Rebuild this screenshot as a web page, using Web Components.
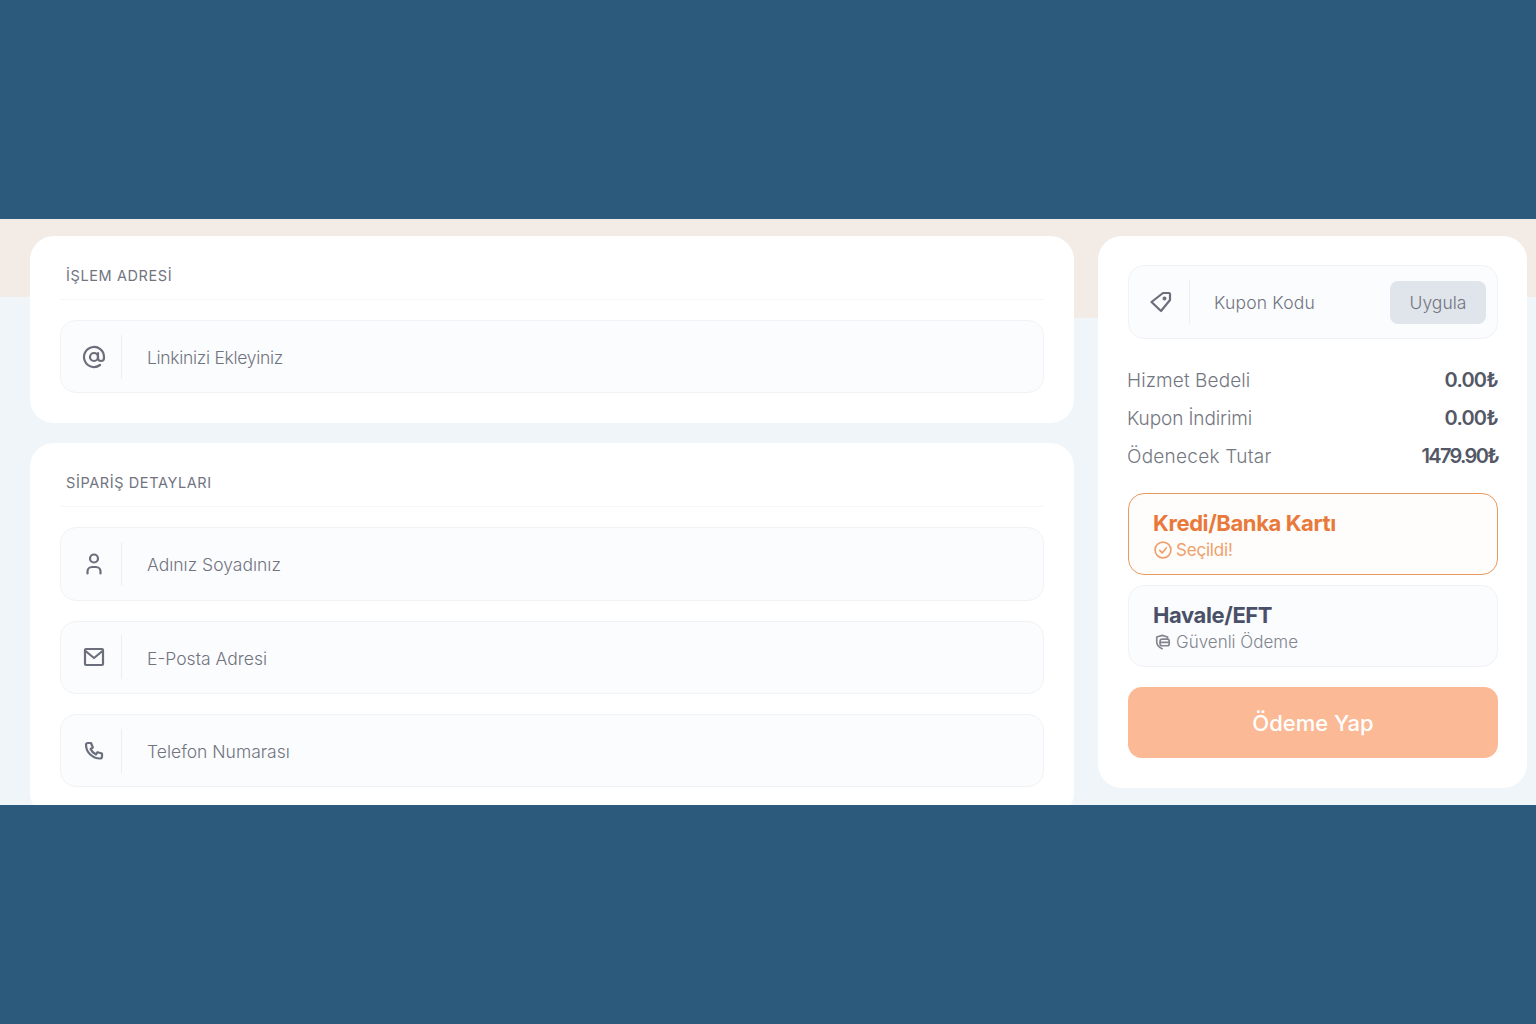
<!doctype html>
<html lang="tr">
<head>
<meta charset="utf-8">
<title>Ödeme</title>
<style>
  html, body { margin: 0; background: #2c5a7c; }
  body { font-family: "Inter", "Noto Sans", sans-serif; }
</style>
</head>
<body>
<checkout-page>
  <div slot="left" style="display:flex;flex-direction:column;gap:20px">
    <panel-card heading="İŞLEM ADRESİ">
      <icon-field icon="at" label="Linkinizi Ekleyiniz" style="--track:-.3px"></icon-field>
    </panel-card>
    <panel-card heading="SİPARİŞ DETAYLARI">
      <icon-field icon="user" label="Adınız Soyadınız"></icon-field>
      <icon-field icon="mail" label="E-Posta Adresi"></icon-field>
      <icon-field icon="phone" label="Telefon Numarası"></icon-field>
    </panel-card>
  </div>
  <summary-card slot="right">
    <icon-field icon="tag" label="Kupon Kodu" action="Uygula" compact style="--track:.2px"></icon-field>
    <div style="display:flex;flex-direction:column;gap:8px;margin:26px 0 22px -1px">
      <price-row label="Hizmet Bedeli" value="0.00₺"></price-row>
      <price-row label="Kupon İndirimi" value="0.00₺" style="--label-track:-.1px"></price-row>
      <price-row label="Ödenecek Tutar" value="1479.90₺" style="--val-track:-1.7px;--label-track:.25px"></price-row>
    </div>
    <pay-option selected title-text="Kredi/Banka Kartı" note="Seçildi!"></pay-option>
    <pay-option title-text="Havale/EFT" note="Güvenli Ödeme"></pay-option>
    <pay-button>Ödeme Yap</pay-button>
  </summary-card>
</checkout-page>

<script>
const ICONS = {
  at: '<circle cx="12" cy="12" r="4"/><path d="M16 8v5a3 3 0 0 0 6 0v-1a10 10 0 1 0-4 8"/>',
  user: '<circle cx="12" cy="6.5" r="4"/><path d="M5.5 21.5v-2a4.5 4.5 0 0 1 4.5-4.5h4a4.5 4.5 0 0 1 4.5 4.5v2"/>',
  mail: '<rect x="3" y="4" width="18" height="16" rx="1"/><path d="M3.5 6l8.500 7 8.500-7"/>',
  phone: '<path d="M6 4h3l1.800 4.500-2.200 1.500a10 10 0 0 0 5.400 5.400l1.500-2.200L20 14.500v3a2 2 0 0 1-2 2A14 14 0 0 1 4 6a2 2 0 0 1 2-2"/>',
  tag: '<path d="M14 3h6a1 1 0 0 1 1 1v6L12 21 2.500 12z"/><circle cx="15.500" cy="8.500" r=".9"/>',
  check: '<circle cx="12" cy="12" r="9.500"/><path d="M8 12.500l3 3 5-6"/>',
  shield: '<path d="M11 4l6.500 2v1.500M11 4L4.500 6v6c0 4 3 6.500 6.500 8"/><rect x="8.500" y="8.500" width="11" height="8" rx="2.500"/><path d="M8.500 12.500h11"/>'
}

function icon(name, size, width) {
  return `<svg width="${size}" height="${size}" viewBox="0 0 24 24" fill="none" stroke="currentColor" stroke-width="${width}" stroke-linecap="round" stroke-linejoin="round">${ICONS[name]}</svg>`
}

class CheckoutPage extends HTMLElement {
  connectedCallback() {
    const shadow = this.attachShadow({ mode: 'open' })
    shadow.innerHTML = `
      <style>
        :host { display: block; height: 1024px; padding-top: 219px; box-sizing: border-box; overflow: hidden; }
        .strip {
          height: 586px;
          overflow: hidden;
          box-sizing: border-box;
          padding: 17px 9px 0 30px;
          display: grid;
          grid-template-columns: 1044px 429px;
          column-gap: 24px;
          align-items: start;
          background:
            linear-gradient(#f3ebe5, #f3ebe5) 0 0 / 100% 78px no-repeat,
            linear-gradient(#f3ebe5, #f3ebe5) 1074px 0 / 24px 99px no-repeat,
            #f0f5fa;
        }
      </style>
      <div class="strip">
        <slot name="left"></slot>
        <slot name="right"></slot>
      </div>
    `
  }
}

class PanelCard extends HTMLElement {
  connectedCallback() {
    const shadow = this.attachShadow({ mode: 'open' })
    shadow.innerHTML = `
      <style>
        :host { display: block; background: #fff; border-radius: 24px; padding: 0 30px 30px; }
        .head {
          height: 64px;
          padding: 16px 6px 0;
          box-sizing: border-box;
          display: flex;
          align-items: center;
          border-bottom: 1px solid #f5f6f8;
          margin-bottom: 20px;
          font-size: 14.500px;
          letter-spacing: .6px;
          color: #71747f;
        }
        .list { display: flex; flex-direction: column; gap: 20px; }
      </style>
      <div class="head">${this.getAttribute('heading')}</div>
      <div class="list"><slot></slot></div>
    `
  }
}

class IconField extends HTMLElement {
  connectedCallback() {
    const shadow = this.attachShadow({ mode: 'open' })
    const action = this.getAttribute('action')
    shadow.innerHTML = `
      <style>
        :host {
          display: flex;
          align-items: center;
          height: 73.330px;
          box-sizing: border-box;
          background: #fbfcfe;
          border: 1px solid #f0f2f5;
          border-radius: 16px;
          color: #71747f;
        }
        :host([compact]) { height: 74px; }
        .icon {
          width: 61px;
          height: 44px;
          box-sizing: border-box;
          padding-left: 21px;
          border-right: 1px solid #eceef1;
          display: flex;
          align-items: center;
          flex: none;
          color: #6b6f7c;
        }
        :host([compact]) .icon { padding-left: 20px; }
        .label { margin: 2px 0 0 25px; flex: 1; font-size: 17.500px; font-weight: 300; letter-spacing: var(--track, 0); }
        :host([compact]) .label { margin: 0 0 0 24px; }
        button {
          font: inherit;
          font-size: 17.500px;
          font-weight: 300;
          color: #71747f;
          width: 96px;
          height: 43px;
          margin-right: 11px;
          border: 0;
          border-radius: 8px;
          background: #e0e4eb;
          padding: 0;
        }
      </style>
      <span class="icon">${icon(this.getAttribute('icon'), 24, 2.2)}</span>
      <span class="label">${this.getAttribute('label')}</span>
      ${action ? `<button>${action}</button>` : ''}
    `
  }
}

class SummaryCard extends HTMLElement {
  connectedCallback() {
    const shadow = this.attachShadow({ mode: 'open' })
    shadow.innerHTML = `
      <style>
        :host { display: block; background: #fff; border-radius: 24px; padding: 29px 29px 30px 30px; }
      </style>
      <slot></slot>
    `
  }
}

class PriceRow extends HTMLElement {
  connectedCallback() {
    const shadow = this.attachShadow({ mode: 'open' })
    shadow.innerHTML = `
      <style>
        :host { display: flex; justify-content: space-between; align-items: center; height: 30px; font-size: 19px; font-weight: 300; letter-spacing: var(--label-track, .1px); color: #74777f; }
        b { font-weight: 600; font-size: 20px; color: #535766; letter-spacing: var(--val-track, -.8px); }
      </style>
      <span>${this.getAttribute('label')}</span>
      <b>${this.getAttribute('value')}</b>
    `
  }
}

class PayOption extends HTMLElement {
  connectedCallback() {
    const shadow = this.attachShadow({ mode: 'open' })
    const selected = this.hasAttribute('selected')
    shadow.innerHTML = `
      <style>
        :host {
          display: block;
          height: 82px;
          box-sizing: border-box;
          margin-bottom: 10px;
          padding: 14px 24px 0;
          background: #fbfcfe;
          border: 1px solid #f0f2f5;
          border-radius: 16px;
        }
        :host([selected]) { background: #fffdfb; border-color: #e89a5e; }
        .title { font-size: 22px; line-height: 30px; font-weight: 700; letter-spacing: -.4px; color: #4a5068; }
        :host([selected]) .title { color: #e8793a; }
        .note { display: flex; align-items: center; gap: 3px; font-size: 17px; font-weight: 300; line-height: 24px; color: #82858e; }
        :host([selected]) .note { color: #eea06a; font-weight: 400; letter-spacing: -.2px; }
      </style>
      <div class="title">${this.getAttribute('title-text')}</div>
      <div class="note">${icon(selected ? 'check' : 'shield', 20, 2)}<span>${this.getAttribute('note')}</span></div>
    `
  }
}

class PayButton extends HTMLElement {
  connectedCallback() {
    const shadow = this.attachShadow({ mode: 'open' })
    shadow.innerHTML = `
      <style>
        :host {
          display: flex;
          align-items: center;
          justify-content: center;
          height: 71px;
          margin-top: 20px;
          border-radius: 14px;
          background: #fbb995;
          color: #fff;
          font-size: 22px;
          font-weight: 500;
        }
      </style>
      <slot></slot>
    `
  }
}

customElements.define('checkout-page', CheckoutPage)
customElements.define('panel-card', PanelCard)
customElements.define('icon-field', IconField)
customElements.define('summary-card', SummaryCard)
customElements.define('price-row', PriceRow)
customElements.define('pay-option', PayOption)
customElements.define('pay-button', PayButton)
</script>
</body>
</html>
